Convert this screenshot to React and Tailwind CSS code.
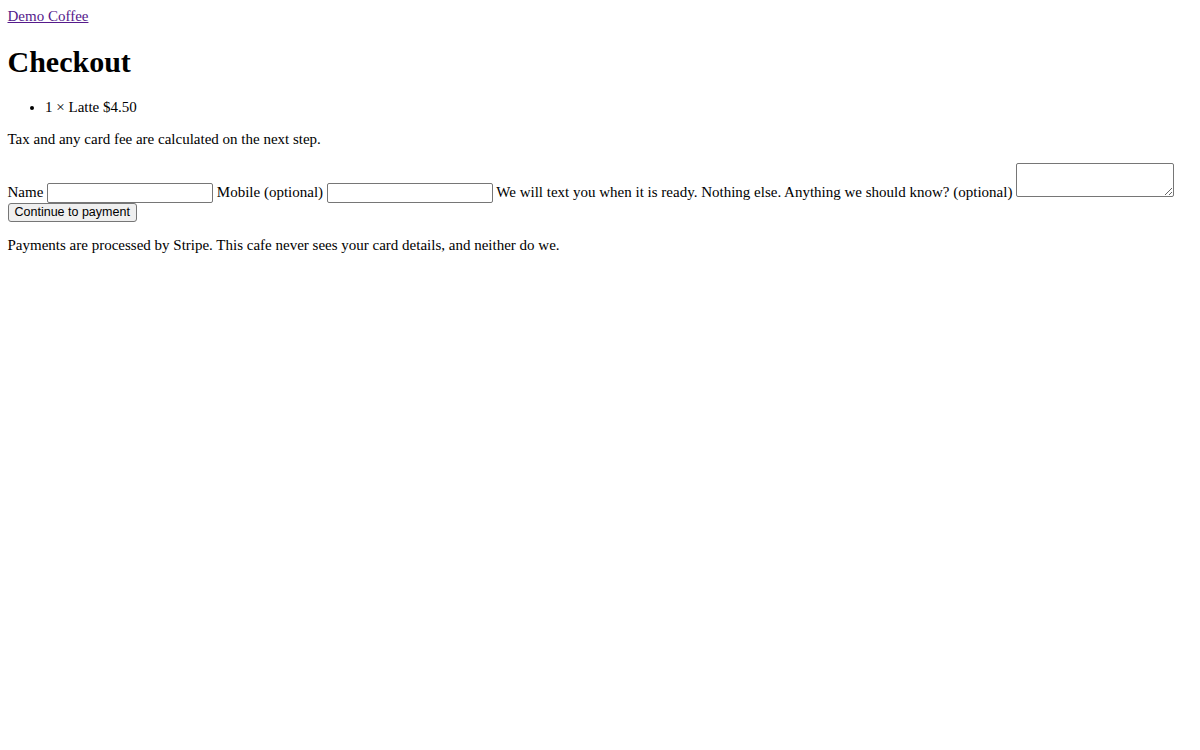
import React from 'react';

const items = [{ qty: 1, name: 'Latte', price: '$4.50' }];

// the page is shown scaled down (1280 -> 1200), so sizes below are the browser defaults times 0.9375
const fieldClass =
  "inline-block align-baseline bg-white border border-[#767676] rounded-[2px] px-[2px] py-[1px] text-[12.5px] font-['Liberation_Sans',Arial,sans-serif]";

export default function App() {
  return (
    <div className="min-h-screen bg-white p-[7.5px] text-[15px] leading-[normal] text-black font-['Liberation_Serif','Times_New_Roman',serif]">
      <header>
        <a href="#" className="text-[#551a8b] underline">Demo Coffee</a>
      </header>

      <main>
        <h1 className="text-[30px] font-bold my-[20.1px]">Checkout</h1>

        <ul className="list-disc pl-[37.5px] my-[15px]">
          {items.map((item, i) => (
            <li key={i}>
              {item.qty} × {item.name} {item.price}
            </li>
          ))}
        </ul>

        <p className="my-[15px]">Tax and any card fee are calculated on the next step.</p>

        <form onSubmit={(e) => e.preventDefault()}>
          <label>
            Name{' '}
            <input type="text" className={`${fieldClass} w-[166px] h-[20px]`} />
          </label>{' '}
          <label>
            Mobile (optional){' '}
            <input type="tel" className={`${fieldClass} w-[166px] h-[20px]`} />
          </label>{' '}
          <span>We will text you when it is ready. Nothing else.</span>{' '}
          <label>
            Anything we should know? (optional){' '}
            <textarea className={`${fieldClass} w-[158px] h-[34px]`} />
          </label>{' '}
          <button
            type="submit"
            className="inline-block h-[19px] bg-[#efefef] border border-[#767676] rounded-[3px] px-[6px] text-[12.5px] leading-[normal] text-black font-['Liberation_Sans',Arial,sans-serif]"
          >
            Continue to payment
          </button>
        </form>

        <p className="my-[15px]">
          Payments are processed by Stripe. This cafe never sees your card details, and neither do we.
        </p>
      </main>
    </div>
  );
}
